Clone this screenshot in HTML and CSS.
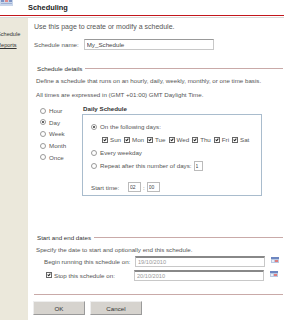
FILE: index.html
```html
<!DOCTYPE html>
<html>
	<head>
		<meta charset="utf-8">
		<title>Scheduling</title>
		<link rel="stylesheet" href="styles.css">
	</head>
	<body>
		<!-- 页面标题 -->
		<div class="top">
			<svg class="logo" width="13" height="6" viewBox="0 0 13 6">
				<rect x="0" y="0" width="13" height="6" fill="#c9d6ea"/>
				<rect x="1" y="0" width="3" height="2" fill="#7c93c4"/>
				<rect x="5" y="0" width="3" height="2" fill="#e08a8a"/>
				<rect x="9" y="0" width="3" height="2" fill="#7c93c4"/>
				<rect x="1" y="3" width="11" height="1" fill="#9eb0d6"/>
			</svg>
			<h1>Scheduling</h1>
		</div>
		<div class="rule"></div>
		<div class="main">
			<div class="side">
				<div class="side-item">Schedule</div>
				<div class="side-item link">Reports</div>
			</div>
			<div class="content">
				<p class="intro">Use this page to create or modify a schedule.</p>
				<div class="name-row">
					<span>Schedule name:</span>
					<input class="name-input" type="text" value="My_Schedule">
				</div>

				<div class="sec-title"><span>Schedule details</span><i></i></div>
				<p class="txt">Define a schedule that runs on an hourly, daily, weekly, monthly, or one time basis.</p>
				<p class="txt">All times are expressed in (GMT +01:00) GMT Daylight Time.</p>

				<div class="freq">
					<div class="radios">
						<div class="opt"><b class="radio"></b>Hour</div>
						<div class="opt"><b class="radio on"></b>Day</div>
						<div class="opt"><b class="radio"></b>Week</div>
						<div class="opt"><b class="radio"></b>Month</div>
						<div class="opt"><b class="radio"></b>Once</div>
					</div>
					<div class="daily">
						<div class="daily-title">Daily Schedule</div>
						<div class="box">
							<div class="opt"><b class="radio on"></b>On the following days:</div>
							<div class="days">
								<span><b class="chk"></b>Sun</span>
								<span><b class="chk"></b>Mon</span>
								<span><b class="chk"></b>Tue</span>
								<span><b class="chk"></b>Wed</span>
								<span><b class="chk"></b>Thu</span>
								<span><b class="chk"></b>Fri</span>
								<span><b class="chk"></b>Sat</span>
							</div>
							<div class="opt"><b class="radio"></b>Every weekday</div>
							<div class="opt"><b class="radio"></b>Repeat after this number of days: <input class="small-input" type="text" value="1"></div>
							<div class="start">
								<span class="start-label">Start time:</span>
								<input class="small-input time" type="text" value="02">
								<span>:</span>
								<input class="small-input time" type="text" value="00">
							</div>
						</div>
					</div>
				</div>

				<div class="sec-title dates"><span>Start and end dates</span><i></i></div>
				<p class="txt">Specify the date to start and optionally end this schedule.</p>
				<div class="date-row">
					<span class="date-label">Begin running this schedule on:</span>
					<input class="date-input" type="text" value="19/10/2010">
					<svg class="cal" width="8" height="6" viewBox="0 0 8 6">
						<rect x="0" y="0" width="8" height="6" fill="#b9c8e2"/>
						<rect x="0" y="0" width="8" height="2" fill="#6d86c0"/>
						<rect x="4" y="3" width="3" height="2" fill="#e07b7b"/>
						<rect x="1" y="3" width="2" height="2" fill="#e8eef8"/>
					</svg>
				</div>
				<div class="date-row">
					<span class="date-label stop"><b class="chk"></b>Stop this schedule on:</span>
					<input class="date-input" type="text" value="20/10/2010">
					<svg class="cal" width="8" height="6" viewBox="0 0 8 6">
						<rect x="0" y="0" width="8" height="6" fill="#b9c8e2"/>
						<rect x="0" y="0" width="8" height="2" fill="#6d86c0"/>
						<rect x="4" y="3" width="3" height="2" fill="#e07b7b"/>
						<rect x="1" y="3" width="2" height="2" fill="#e8eef8"/>
					</svg>
				</div>
				<div class="end-rule"></div>
				<div class="buttons">
					<button type="button">OK</button>
					<button type="button">Cancel</button>
				</div>
			</div>
		</div>
	</body>
</html>
```

FILE: styles.css
```css
body,
div,
p,
h1 {
	margin: 0;
	padding: 0;
}
body {
	width: 307px;
	height: 320px;
	overflow: hidden;
	background-color: #fff;
	font-family: "Liberation Sans", Arial, sans-serif;
	font-size: 6.2px;
	color: #555;
}
.top {
	height: 15px;
	display: flex;
	align-items: flex-start;
}
.logo {
	display: block;
}
.top h1 {
	margin-left: 15px;
	margin-top: 3px;
	font-size: 7.4px;
	font-weight: bold;
	color: #222;
}
.rule {
	width: 284px;
	height: 1px;
	border-top: 1px solid #c2161c;
	border-bottom: 1px solid #d8d8d8;
}
.main {
	display: flex;
	height: 303px;
}
.side {
	width: 28px;
	background-color: #ebe8db;
	overflow: hidden;
	padding-top: 13px;
}
.side-item {
	margin-left: -3px;
	height: 11px;
	color: #333;
	font-size: 5.6px;
}
.side-item.link {
	text-decoration: underline;
}
.content {
	width: 249px;
	padding-left: 6px;
	padding-top: 5px;
}
.intro {
	height: 14px;
	font-size: 7px;
}
.name-row {
	display: flex;
	align-items: center;
	gap: 5px;
	height: 14px;
}
.name-input {
	width: 124px;
	height: 9px;
	padding: 0 2px;
	border: 1px solid #c8c8c8;
	border-top-color: #999;
	font: inherit;
	color: #444;
	outline: none;
}
.sec-title {
	display: flex;
	align-items: center;
	gap: 3px;
	margin-top: 13px;
	padding-left: 3px;
	height: 8px;
	color: #333;
}
.sec-title i {
	flex: 1;
	border-top: 1px solid #c9aaa8;
}
.txt {
	height: 11px;
	line-height: 11px;
	padding-left: 2px;
	margin-top: 3px;
}
.txt + .txt {
	margin-top: 3px;
}
.freq {
	display: flex;
	margin-top: 5px;
}
.radios {
	width: 42px;
	padding-left: 6px;
}
.radios .opt {
	height: 11.6px;
}
.opt {
	display: flex;
	align-items: center;
}
.radio {
	display: inline-block;
	width: 4px;
	height: 4px;
	border: 1px solid #9a9a9a;
	border-radius: 50%;
	margin-right: 3px;
	position: relative;
}
.radio.on::after {
	content: "";
	position: absolute;
	left: 1px;
	top: 1px;
	width: 2px;
	height: 2px;
	border-radius: 50%;
	background-color: #333;
}
.chk {
	display: inline-block;
	width: 4px;
	height: 4px;
	border: 1px solid #666;
	margin-right: 2px;
	position: relative;
}
.chk::after {
	content: "";
	position: absolute;
	left: 1px;
	top: 0;
	width: 1px;
	height: 2px;
	border-right: 1px solid #222;
	border-bottom: 1px solid #222;
	transform: rotate(40deg);
}
.daily-title {
	height: 8px;
	font-weight: bold;
	color: #333;
	padding-left: 1px;
}
.box {
	width: 166px;
	height: 75px;
	margin-top: 1px;
	padding: 5px 4px 0 8px;
	border: 1px solid #a9bccd;
}
.box > .opt {
	height: 13px;
}
.days {
	display: flex;
	gap: 3px;
	height: 13px;
	align-items: center;
	padding-left: 11px;
}
.days span {
	display: flex;
	align-items: center;
}
.small-input {
	width: 5px;
	height: 8px;
	margin-left: 2px;
	padding: 0 1px;
	border: 1px solid #bbb;
	font: inherit;
	font-size: 5px;
	color: #444;
}
.start {
	display: flex;
	align-items: center;
	margin-top: 10px;
	gap: 2px;
}
.start-label {
	width: 35px;
}
.small-input.time {
	width: 9px;
	margin-left: 0;
}
.sec-title.dates {
	margin-top: 37px;
}
.date-row {
	display: flex;
	align-items: center;
	height: 13.5px;
}
.date-row:first-of-type {
	margin-top: 1px;
}
.date-label {
	width: 91px;
	padding-left: 10px;
	display: flex;
	align-items: center;
}
.date-label.stop {
	padding-left: 12px;
	width: 88px;
}
.date-input {
	width: 124px;
	height: 8px;
	padding: 0 2px;
	border: 1px solid #c8c8c8;
	border-top: 2px solid #888;
	font: inherit;
	font-size: 5.6px;
	color: #999;
}
.cal {
	margin-left: 6px;
	margin-top: -3px;
}
.end-rule {
	margin-top: 12px;
	width: 249px;
	border-top: 1px solid #c9aaa8;
}
.buttons {
	display: flex;
	gap: 5px;
	margin-top: 6px;
	margin-left: -1px;
}
.buttons button {
	width: 52px;
	height: 14px;
	padding: 0;
	background-color: #d6d3ce;
	border: 1px solid #9a9a9a;
	border-top-color: #eee;
	border-left-color: #eee;
	font: inherit;
	color: #333;
}
```
